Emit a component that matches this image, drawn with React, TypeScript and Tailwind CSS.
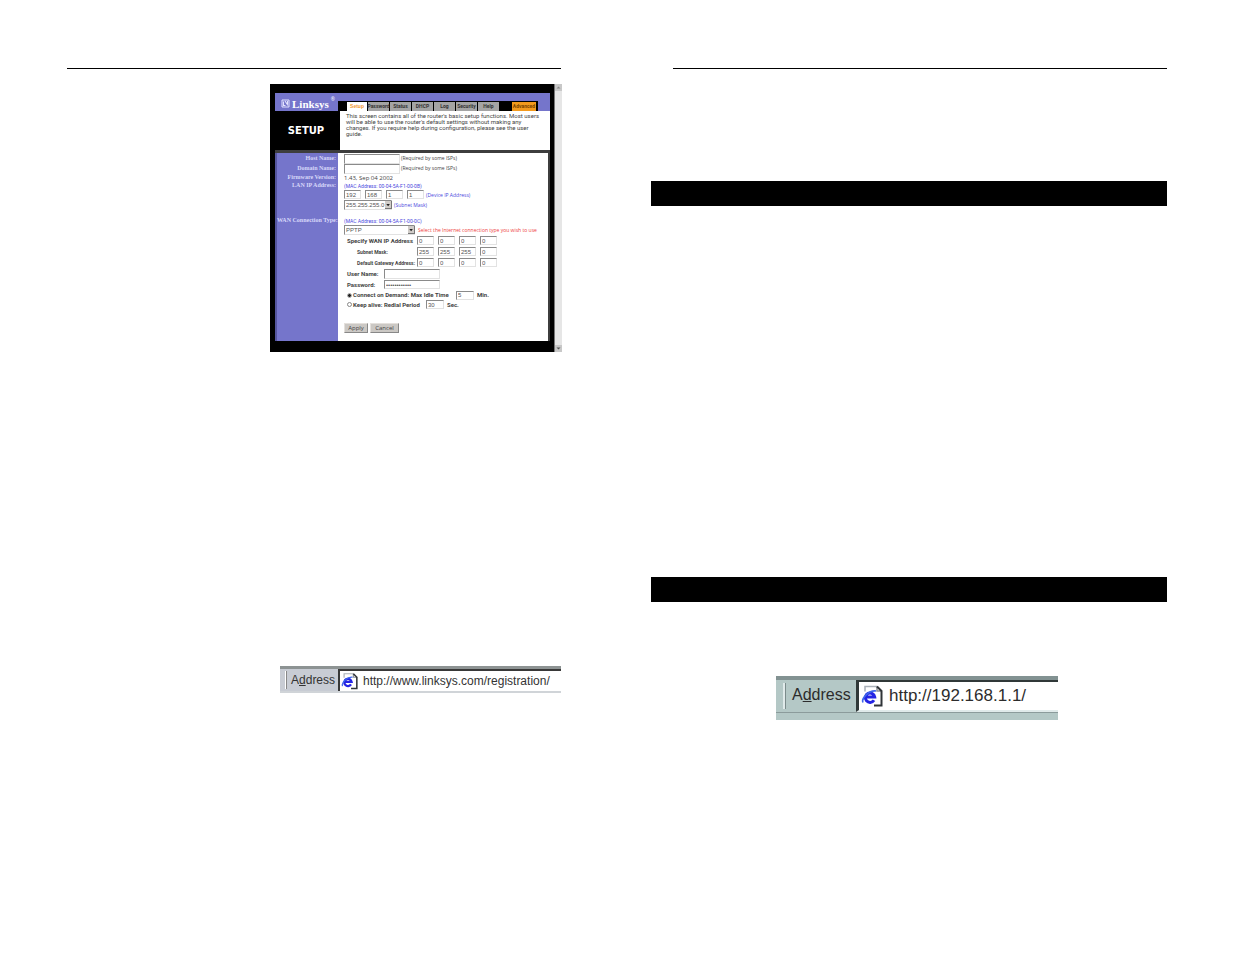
import React from "react";

const FIELD =
  "block rounded-none border border-t-[#8a8a8a] border-l-[#8a8a8a] border-r-[#e2e2e2] border-b-[#e2e2e2] bg-white p-0 pl-px font-['Liberation_Sans',sans-serif] text-[6px] leading-[7px] font-normal text-[#555] outline-none";

const BOLD_ROW = "flex pl-[3px] font-['Roboto',sans-serif] text-[6px] leading-[10px] font-bold";

const RADIO =
  "mr-px h-[5px] w-[5px] appearance-none rounded-full border border-[#888] bg-white checked:border-[#bbb] checked:bg-[#222]";

const BUTTON =
  "h-[10px] border border-t-[#e4e0dc] border-l-[#e4e0dc] border-r-[#888] border-b-[#888] bg-[#cbc8c4]";

const TABS = ["Password", "Status", "DHCP", "Log", "Security", "Help"];

function Octets({ label, values }: { label: string; values: string[] }) {
  return (
    <div className="flex gap-1">
      {values.map((v, i) => (
        <input key={i} aria-label={`${label} ${i + 1}`} defaultValue={v} className={`${FIELD} h-[9px] w-[17px]`} />
      ))}
    </div>
  );
}

function Picker({ id, label, value, className }: { id: string; label: string; value: string; className: string }) {
  return (
    <div className={`relative ${className}`}>
      <select id={id} aria-label={label} defaultValue={value} className={`${FIELD} h-[10px] w-full appearance-none`}>
        <option>{value}</option>
      </select>
      <svg viewBox="0 0 7 8" className="pointer-events-none absolute top-px right-0 h-[8px] w-[7px]" aria-hidden="true">
        <rect width="7" height="8" fill="#777" />
        <rect width="6" height="7" fill="#d0ccc8" />
        <path d="M1.3 3h3.6L3.1 5.2z" fill="#222" />
      </svg>
    </div>
  );
}

function WanRow({ label, values, indent }: { label: string; values: string[]; indent?: boolean }) {
  return (
    <div className="flex h-[11px] items-start font-['Roboto',sans-serif] leading-[10px] font-bold">
      <span className={indent ? "w-[73px] pl-[13px] text-[5px]" : "w-[73px] pl-[3px] text-[6px]"}>{label}</span>
      <Octets label={label} values={values} />
    </div>
  );
}

function SetupCapture() {
  return (
    <section className="flex h-[268px] w-[292px] overflow-hidden whitespace-nowrap font-['Open_Sans','DejaVu_Sans',sans-serif] text-[#444]">
      <div className="flex-1 bg-black pt-[9px] pr-[4px] pl-[5px]">
        <header className="flex h-[18px] bg-[#7575cb]">
          <div className="flex w-[63px] items-center gap-[2px] pt-[3px] pl-[6px] text-white">
            <svg viewBox="0 0 9 9" className="h-[9px] w-[9px]" fill="none" stroke="#e4e4ff" aria-hidden="true">
              <path d="M1 1h7v7H1z" strokeWidth="1" />
              <path d="M2.5 2.5v4h2M4 2l3 4.5M6.5 2v3" strokeWidth="1.1" />
            </svg>
            <span className="font-['Liberation_Serif',serif] text-[11px] leading-[10px] font-bold">Linksys</span>
            <span className="self-start text-[5px] leading-[7px]">®</span>
          </div>
          <nav className="mt-[8px] flex h-[10px] w-[200px] gap-px bg-black pt-px pl-[9px] text-center font-['Liberation_Sans',sans-serif] text-[5px] leading-[9px] font-bold">
            <a href="#setup" className="w-[20px] bg-white text-[#f39a32]">Setup</a>
            {TABS.map((t) => (
              <a
                key={t}
                href={`#${t.toLowerCase()}`}
                className="flex w-[21px] justify-center bg-[#a4a4a4] font-['Roboto',sans-serif] text-[#333]"
              >
                {t}
              </a>
            ))}
            <a href="#advanced" className="mr-[2px] ml-auto w-[24px] bg-[#f39a1d] font-['Roboto',sans-serif] text-[#7a4400]">Advanced</a>
          </nav>
        </header>
        <div className="flex h-[39px]">
          <h1 className="w-[65px] pt-px pr-[3px] text-center font-['DejaVu_Sans',sans-serif] text-[10px] leading-[38px] font-bold text-white">SETUP</h1>
          <p className="flex-1 bg-white pt-[2px] pl-[6px] font-['Roboto',sans-serif] text-[6px] leading-[6px]">
            This screen contains all of the router's basic setup functions. Most users
            <br />
            will be able to use the router's default settings without making any
            <br />
            changes. If you require help during configuration, please see the user
            <br />
            guide.
          </p>
        </div>
        <div className="flex h-[191px] border-t-[3px] border-r-2 border-[#3d3d3d]">
          <div className="w-[63px] border-l-2 border-[#55559d] bg-[#7575cb] pr-[2px] text-right font-['Liberation_Serif',serif] text-[6px] font-bold text-[#d8d8fa]">
            <label htmlFor="host" className="block h-[10px] leading-[10px]">Host Name:</label>
            <label htmlFor="domain" className="block h-[10px] leading-[10px]">Domain Name:</label>
            <span className="block h-[8px] leading-[9px]">Firmware Version:</span>
            <span className="block h-[8px] leading-[9px]">LAN IP Address:</span>
            <label htmlFor="wan" className="mt-[26px] block h-[10px] leading-[10px]">WAN Connection Type:</label>
          </div>
          <form className="flex-1 bg-white pt-px pl-[6px] text-[5px]" onSubmit={(e) => e.preventDefault()}>
            <div className="flex h-[10px] items-center gap-px">
              <input id="host" className={`${FIELD} h-[10px] w-[56px]`} />
              <span>(Required by some ISPs)</span>
            </div>
            <div className="flex h-[10px] items-center gap-px">
              <input id="domain" className={`${FIELD} h-[10px] w-[56px]`} />
              <span>(Required by some ISPs)</span>
            </div>
            <div className="h-[8px] text-[6px] leading-[8px]">1.43, Sep 04 2002</div>
            <div className="h-[8px] font-['Roboto',sans-serif] leading-[8px] text-[#4a48dd]">(MAC Address: 00-04-5A-F1-00-0B)</div>
            <div className="flex h-[10px] items-start gap-[2px]">
              <Octets label="LAN IP Address" values={["192", "168", "1", "1"]} />
              <span className="leading-[10px] text-[#4a48dd]">(Device IP Address)</span>
            </div>
            <div className="flex h-[10px] items-center gap-[2px]">
              <Picker id="mask" label="Subnet Mask" value="255.255.255.0" className="w-[48px]" />
              <span className="leading-[10px] text-[#4a48dd]">(Subnet Mask)</span>
            </div>
            <div className="mt-[7px] h-[8px] font-['Roboto',sans-serif] leading-[8px] text-[#4a48dd]">(MAC Address: 00-04-5A-F1-00-0C)</div>
            <div className="mb-px flex h-[10px] items-center gap-[3px]">
              <Picker id="wan" label="WAN Connection Type" value="PPTP" className="w-[71px]" />
              <span className="leading-[10px] text-[#ee4040]">Select the Internet connection type you wish to use</span>
            </div>
            <WanRow label="Specify WAN IP Address" values={["0", "0", "0", "0"]} />
            <WanRow label="Subnet Mask:" values={["255", "255", "255", "0"]} indent />
            <WanRow label="Default Gateway Address:" values={["0", "0", "0", "0"]} indent />
            <div className={`${BOLD_ROW} h-[11px] items-start`}>
              <label htmlFor="user" className="w-[37px]">User Name:</label>
              <input id="user" className={`${FIELD} h-[10px] w-[56px]`} />
            </div>
            <div className={`${BOLD_ROW} h-[10px] items-start`}>
              <label htmlFor="pass" className="w-[37px]">Password:</label>
              <input id="pass" type="password" defaultValue="secretsecret" className={`${FIELD} h-[9px] w-[56px]`} />
            </div>
            <div className={`${BOLD_ROW} h-[10px] items-center`}>
              <input id="demand" type="radio" name="mode" defaultChecked className={RADIO} />
              <label htmlFor="demand" className="w-[103px]">Connect on Demand: Max Idle Time</label>
              <input aria-label="Max Idle Time" defaultValue="5" className={`${FIELD} h-[9px] w-[18px]`} />
              <span className="pl-[3px]">Min.</span>
            </div>
            <div className={`${BOLD_ROW} h-[9px] items-center`}>
              <input id="alive" type="radio" name="mode" className={RADIO} />
              <label htmlFor="alive" className="w-[73px]">Keep alive: Redial Period</label>
              <input aria-label="Redial Period" defaultValue="30" className={`${FIELD} h-[9px] w-[18px]`} />
              <span className="pl-[3px]">Sec.</span>
            </div>
            <div className="mt-[14px] flex gap-[2px] text-[6px] leading-[8px]">
              <button type="submit" className={`${BUTTON} w-[24px]`}>Apply</button>
              <button type="reset" className={`${BUTTON} w-[29px]`}>Cancel</button>
            </div>
          </form>
        </div>
      </div>
      <div className="flex w-[8px] flex-col justify-between border-l border-[#777] bg-[#e6e6e6]">
        <svg viewBox="0 0 7 7" className="h-[7px] w-[7px]" aria-hidden="true">
          <path d="M0 0h7v7H0z" fill="#c8c8c8" />
          <path d="M1.5 4.5h4l-2-2z" fill="#888" />
        </svg>
        <svg viewBox="0 0 7 7" className="h-[7px] w-[7px]" aria-hidden="true">
          <path d="M0 0h7v7H0z" fill="#c8c8c8" />
          <path d="M1.5 2.5h4l-2 2z" fill="#555" />
        </svg>
      </div>
    </section>
  );
}

function PageIcon({ className }: { className: string }) {
  return (
    <svg viewBox="0 0 22 22" className={className} fill="none" aria-hidden="true">
      <path d="M4 1h12l5 5v14H4z" fill="#fff" />
      <path d="M4 6V1h12" stroke="#a9b0b8" strokeWidth="1.5" />
      <path d="M16 1v4.500h5" stroke="#8a9098" strokeWidth="1.500" />
      <path d="M16 1l4.500 4.500V20H13" stroke="#303438" strokeWidth="2" />
      <path d="M13 14.800A4.700 4.700 0 1 1 13.700 11.500H5.500" stroke="#2424e4" strokeWidth="3" />
      <path d="M2 17C0 13 8 4.500 15 5.500" stroke="#3d66ea" strokeWidth="1.600" />
    </svg>
  );
}

export default function App() {
  return (
    <main className="grid grid-cols-[494fr_516fr] gap-[90px] bg-white pt-[68px] pr-[68px] pb-10 pl-[67px]">
      <article className="flex flex-col items-end">
        <hr className="w-full border-t border-black" />
        <div className="-mr-px mt-[15px]">
          <SetupCapture />
        </div>
        <div className="mt-[314px] flex h-[27px] w-[281px] border-t-[3px] border-b-2 border-t-[#8d9393] border-b-[#d0d4d8] bg-[#c8ccd4] font-['Liberation_Sans',sans-serif] text-[12px] leading-[22px] text-[#333]">
          <span className="my-[2px] ml-[5px] w-[2px] border-r border-l border-r-[#888] border-l-white" />
          <label htmlFor="registration" className="w-[51px] pl-[4px]">
            A<u>d</u>dress
          </label>
          <div className="flex min-w-0 flex-1 items-center gap-[5px] border-t-2 border-l-2 border-[#383838] bg-white pl-px">
            <PageIcon className="h-[17px] w-[17px] shrink-0" />
            <input id="registration" defaultValue="http://www.linksys.com/registration/" className="min-w-0 flex-1 bg-transparent outline-none" />
          </div>
        </div>
      </article>
      <article className="flex flex-col">
        <hr className="ml-[22px] border-t border-black" />
        <div className="mt-[112px] h-[25px] bg-black" />
        <div className="mt-[371px] h-[25px] bg-black" />
        <div className="mt-[74px] ml-[125px] h-[44px] w-[282px] bg-[#b4c8c6] font-['Liberation_Sans',sans-serif] text-[16px] leading-[30px] text-[#2c2c2c]">
          <div className="flex h-[37px] border-t-4 border-b border-t-[#829292] border-b-[#8b9b9b]">
            <span className="my-[3px] ml-[7px] w-[3px] border-r border-l-2 border-r-[#7b8b8b] border-l-[#e0eaea]" />
            <label htmlFor="router" className="w-[70px] pl-[6px]">
              A<u>d</u>dress
            </label>
            <div className="flex min-w-0 flex-1 items-center gap-[6px] border-t-2 border-b-2 border-l-[3px] border-t-[#303838] border-b-[#e0eaea] border-l-[#303838] bg-white pl-[2px]">
              <PageIcon className="h-[23px] w-[22px] shrink-0" />
              <input id="router" defaultValue="http://192.168.1.1/" className="min-w-0 flex-1 bg-transparent text-[17px] outline-none" />
            </div>
          </div>
        </div>
      </article>
    </main>
  );
}
